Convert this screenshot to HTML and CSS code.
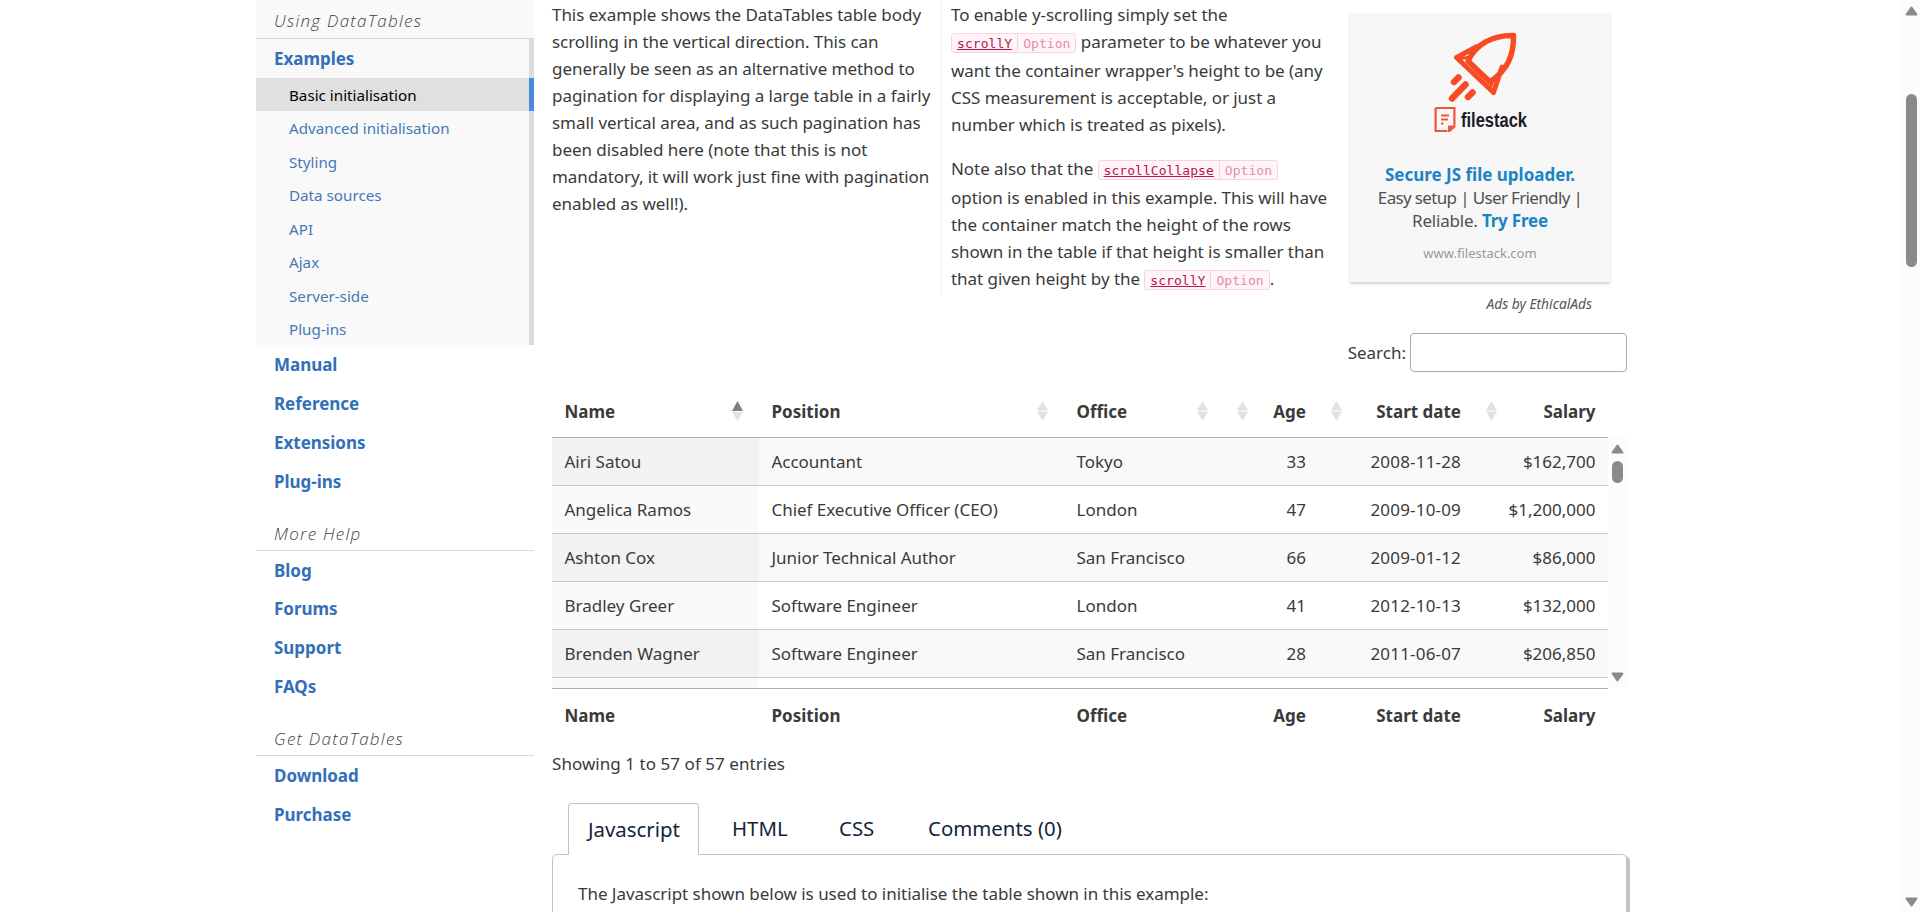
FILE: index.html
```html
<!DOCTYPE html>
<html lang="en">
<head>
<meta charset="utf-8">
<title>DataTables example - Scroll - vertical</title>
<link rel="stylesheet" href="styles.css">
</head>
<body>
<div class="page">
  <nav class="sidebar">
    <h3 class="nav-title nav-title-first">Using DataTables</h3>
    <div class="nav-active">
      <a class="nav-item">Examples</a>
      <a class="nav-sub selected">Basic initialisation</a>
      <a class="nav-sub">Advanced initialisation</a>
      <a class="nav-sub">Styling</a>
      <a class="nav-sub">Data sources</a>
      <a class="nav-sub">API</a>
      <a class="nav-sub">Ajax</a>
      <a class="nav-sub">Server-side</a>
      <a class="nav-sub">Plug-ins</a>
    </div>
    <a class="nav-item">Manual</a>
    <a class="nav-item">Reference</a>
    <a class="nav-item">Extensions</a>
    <a class="nav-item">Plug-ins</a>
    <h3 class="nav-title">More Help</h3>
    <a class="nav-item">Blog</a>
    <a class="nav-item">Forums</a>
    <a class="nav-item">Support</a>
    <a class="nav-item">FAQs</a>
    <h3 class="nav-title">Get DataTables</h3>
    <a class="nav-item">Download</a>
    <a class="nav-item">Purchase</a>
  </nav>

  <main class="main">
    <section class="intro">
      <div class="col col-a">
        <p><span class="line">This example shows the DataTables table body</span>
        <span class="line">scrolling in the vertical direction. This can</span>
        <span class="line">generally be seen as an alternative method to</span>
        <span class="line">pagination for displaying a large table in a fairly</span>
        <span class="line">small vertical area, and as such pagination has</span>
        <span class="line">been disabled here (note that this is not</span>
        <span class="line">mandatory, it will work just fine with pagination</span>
        <span class="line">enabled as well!).</span></p>
      </div>
      <div class="col col-b">
        <p><span class="line">To enable y-scrolling simply set the</span>
        <span class="line tagged"><code class="tag"><a>scrollY</a><i>Option</i></code> parameter to be whatever you</span>
        <span class="line">want the container wrapper's height to be (any</span>
        <span class="line">CSS measurement is acceptable, or just a</span>
        <span class="line">number which is treated as pixels).</span></p>
        <p><span class="line tagged">Note also that the <code class="tag"><a>scrollCollapse</a><i>Option</i></code></span>
        <span class="line">option is enabled in this example. This will have</span>
        <span class="line">the container match the height of the rows</span>
        <span class="line">shown in the table if that height is smaller than</span>
        <span class="line tagged">that given height by the <code class="tag"><a>scrollY</a><i>Option</i></code>.</span></p>
      </div>
      <aside class="ad">
        <div class="ad-box">
          <svg class="ad-logo" width="140" height="110" viewBox="-13 0 140 110">
            <g fill="none" stroke="#fa4a25" stroke-linejoin="round" stroke-linecap="round">
              <path stroke-width="5.5" d="M48 30 L39 37 L70.500 61 L72.500 50 C84 42 92 26 90 9.500 C72 9 55 18 48 30 Z" stroke="none"/>
              <path stroke-width="5.5" d="M45 35 C53 18 70 9 90.500 9.500 C91 30 84 44 67 56 Z"/>
              <path stroke-width="5" d="M54 20.500 L33.500 31.500 L70.500 66.500 L79 41"/>
              <path stroke-width="3" d="M38 32.500 L47 31 M68 60 L71 52"/>
              <path stroke-width="6.500" d="M31 56 L35.500 51.500 M29 72.500 L42.500 58.500 M45 71 L49.500 66.500"/>
            </g>
            <path fill="none" stroke="#f0563c" stroke-width="2.200" d="M12.600 82 H31.400 V99.500 M24.500 105 H12.600 V82"/>
            <path fill="#f0563c" d="M32.500 99.500 V101 L27 106 H25 V99.500 Z"/>
            <path fill="none" stroke="#f0563c" stroke-width="2" d="M18 89.500 H26 M18 93.500 H25 M18 97.500 H20.500"/>
            <text x="38" y="101" textLength="66" lengthAdjust="spacingAndGlyphs" class="ad-brand">filestack</text>
          </svg>
          <div class="ad-text">
            <div class="ad-l1"><b>Secure JS file uploader.</b></div>
            <div class="ad-l2">Easy setup | User Friendly |</div>
            <div class="ad-l3">Reliable. <b>Try Free</b></div>
          </div>
          <div class="ad-url">www.filestack.com</div>
        </div>
        <div class="ad-by">Ads by EthicalAds</div>
      </aside>
    </section>

    <div class="search"><label for="q">Search:</label><input id="q" type="text"></div>

    <div class="row head">
      <div>Name<svg class="sort asc" viewBox="0 0 11 20"><path d="M5.500 0L11 10H0Z"/><path d="M0 11H11L5.500 20Z"/></svg></div>
      <div>Position<svg class="sort" viewBox="0 0 11 20"><path d="M5.500 0L11 9.500H0Z"/><path d="M0 10.500H11L5.500 20Z"/></svg></div>
      <div>Office<svg class="sort" viewBox="0 0 11 20"><path d="M5.500 0L11 9.500H0Z"/><path d="M0 10.500H11L5.500 20Z"/></svg></div>
      <div><svg class="sort" viewBox="0 0 11 20"><path d="M5.500 0L11 9.500H0Z"/><path d="M0 10.500H11L5.500 20Z"/></svg>Age</div>
      <div><svg class="sort" viewBox="0 0 11 20"><path d="M5.500 0L11 9.500H0Z"/><path d="M0 10.500H11L5.500 20Z"/></svg>Start date</div>
      <div><svg class="sort" viewBox="0 0 11 20"><path d="M5.500 0L11 9.500H0Z"/><path d="M0 10.500H11L5.500 20Z"/></svg>Salary</div>
    </div>
    <div class="scroll-body">
      <div class="rows">
        <div class="row"><div>Airi Satou</div><div>Accountant</div><div>Tokyo</div><div>33</div><div>2008-11-28</div><div>$162,700</div></div>
        <div class="row"><div>Angelica Ramos</div><div>Chief Executive Officer (CEO)</div><div>London</div><div>47</div><div>2009-10-09</div><div>$1,200,000</div></div>
        <div class="row"><div>Ashton Cox</div><div>Junior Technical Author</div><div>San Francisco</div><div>66</div><div>2009-01-12</div><div>$86,000</div></div>
        <div class="row"><div>Bradley Greer</div><div>Software Engineer</div><div>London</div><div>41</div><div>2012-10-13</div><div>$132,000</div></div>
        <div class="row"><div>Brenden Wagner</div><div>Software Engineer</div><div>San Francisco</div><div>28</div><div>2011-06-07</div><div>$206,850</div></div>
        <div class="row"><div></div><div></div><div></div><div></div><div></div><div></div></div>
      </div>
      <div class="bar bar-table">
        <svg width="13" height="10" viewBox="0 0 13 10"><path d="M6.500 1.500L11.500 8.500H1.500Z"/></svg>
        <span class="thumb"></span>
        <svg width="13" height="10" viewBox="0 0 13 10"><path d="M6.500 8.500L11.500 1.500H1.500Z"/></svg>
      </div>
    </div>
    <div class="row foot"><div>Name</div><div>Position</div><div>Office</div><div>Age</div><div>Start date</div><div>Salary</div></div>
    <div class="info">Showing 1 to 57 of 57 entries</div>

    <div class="tabs">
      <a class="tab tab-js active">Javascript</a><a class="tab tab-html">HTML</a><a class="tab tab-css">CSS</a><a class="tab tab-com">Comments (0)</a>
    </div>
    <div class="panel">The Javascript shown below is used to initialise the table shown in this example:</div>
  </main>

  <div class="bar bar-page">
    <svg width="13" height="10" viewBox="0 0 13 10"><path d="M6.500 1.500L11.500 8.500H1.500Z"/></svg>
    <span class="thumb"></span>
    <svg width="13" height="10" viewBox="0 0 13 10"><path d="M6.500 8.500L11.500 1.500H1.500Z"/></svg>
  </div>
</div>
</body>
</html>
```
FILE: styles.css
```css
* { box-sizing: border-box; }
html, body { margin: 0; height: 912px; overflow: hidden; background: #fff; }
body { font: 17px/27px "Noto Sans", "Open Sans", sans-serif; color: #3a3a3a; }
p, h3 { margin: 0; }
.page { display: flex; height: 912px; padding-left: 256px; overflow: hidden; }

/* Sidebar */
.sidebar { width: 278px; flex: none; display: flex; flex-direction: column; margin-right: 18px; }
.nav-title {
  height: 50px; flex: none; padding: 19px 0 0 18px; border-bottom: 1px solid #d9d9d9;
  font: italic 300 17px/27px "Open Sans", "Noto Sans", sans-serif; letter-spacing: 1.25px; color: #444;
}
.nav-title-first { height: 39px; padding-top: 7px; background: #f9f9f9; }
.nav-active { flex: none; height: 306px; background: #f9f9f9; border-right: 5px solid #dcdcdc; }
.nav-item { display: block; flex: none; height: 38.9px; padding-left: 18px; line-height: 40.5px; font-weight: 700; letter-spacing: -.03px; color: #3270b8; }
.nav-sub { display: block; height: 33.45px; padding-left: 33px; line-height: 35px; font-size: 15.2px; color: #4678b4; }
.nav-sub.selected { background: #e0e0e0; color: #000; margin-right: -5px; border-right: 5px solid #4a8ad8; }

/* Intro */
.main { width: 1075px; flex: none; display: flex; flex-direction: column; }
.intro { display: flex; height: 332px; flex: none; }
.col { height: 295px; padding-top: 1px; letter-spacing: -.05px; }
.col-a { width: 389px; }
.col-b { width: 409px; padding-left: 9px; border-left: 1px solid #f2f2f2; }
.col p { margin-bottom: 17.5px; }
.line { display: block; height: 27px; white-space: nowrap; }
.line.tagged { height: 28.8px; }
.tag {
  display: inline-flex; height: 20px; border: 1px solid #f6d3de; border-radius: 3px;
  background: #fff4f8; font: 13px/19px "DejaVu Sans Mono", monospace; letter-spacing: .05px;
}
.tag a { padding: 0 5px; color: #b91350; text-decoration: underline; border-right: 1px solid #f6d3de; }
.tag i { padding: 0 5px; font-style: normal; color: #e58cab; }

/* Advert */
.ad { width: 260px; padding-top: 13px; }
.ad-box {
  height: 269px; background: #f7f7f7; border-radius: 2px; text-align: center;
  box-shadow: 0 2px 3px rgba(0, 0, 0, .18); display: flex; flex-direction: column; align-items: center;
}
.ad-logo { margin-top: 13px; flex: none; overflow: visible; }
.ad-brand { font: 700 20px "Liberation Sans", sans-serif; fill: #1c1b26; }
.ad-text { margin-top: 27px; line-height: 23px; color: #505050; white-space: nowrap; }
.ad-text b { color: #1a84c4; }
.ad-l2 { letter-spacing: -.65px; }
.ad-l3 { letter-spacing: -.2px; }
.ad-url { margin-top: 10px; font-size: 13px; line-height: 22px; color: #999; }
.ad-by { margin: 10px 18px 0 0; text-align: right; font-size: 13.8px; line-height: 24px; font-style: italic; color: #555; }

/* Table */
.search { height: 41px; flex: none; display: flex; justify-content: flex-end; align-items: center; gap: 4px; }
.search input { width: 217px; height: 39px; border: 1px solid #aaa; border-radius: 4px; background: #fff; }
.row {
  display: grid; grid-template-columns: 207px 305px 160px 94.5px 155px 134.5px; width: 1056px;
  height: 48px; flex: none; border-bottom: 1px solid #c9c9c9; line-height: 47px; white-space: nowrap;
}
.row > div { padding: 0 12.5px; }
.row > div:nth-child(n+4) { text-align: right; }
.head { height: 51px; margin-top: 14px; border-bottom-color: #aeaeae; font-weight: 700; line-height: 49px; }
.head > div { display: flex; justify-content: space-between; align-items: center; padding-bottom: 2px; }
.head > div:nth-child(-n+3) { padding-right: 16.5px; }
.head > div:nth-child(n+4) { padding-left: 12.5px; }
.sort { width: 11px; height: 20px; margin-bottom: 1px; fill: #e2e2e2; }
.sort.asc path:first-child { fill: #808080; }
.scroll-body { display: flex; height: 250px; flex: none; overflow: hidden; }
.rows .row:nth-child(odd) { background: #f9f9f9; }
.rows .row:nth-child(odd) > div:first-child { background: #f2f2f2; }
.rows .row:nth-child(even) > div:first-child { background: #fafafa; }
.rows .row > div:nth-child(2) { letter-spacing: -.03px; }
.rows .row > div:nth-child(5) { letter-spacing: .18px; }
.foot { height: 47px; border: 0; border-top: 1px solid #aeaeae; font-weight: 700; line-height: 54px; }
.info { margin-top: 15px; height: 27px; flex: none; letter-spacing: .05px; }

/* Tabs */
.tabs { display: flex; flex: none; margin: 26px 0 -1px 16px; height: 52px; position: relative; }
.tab { height: 52px; font-size: 20.4px; line-height: 51px; color: #12243c; white-space: nowrap; }
.tab-js { width: 131px; padding-left: 19px; margin-right: 33px; border: 1px solid #c4c4c4; border-bottom: 0; border-radius: 4px 4px 0 0; background: #fff; }
.tab-html { width: 107px; }
.tab-css { width: 89px; }
.panel { height: 90px; flex: none; padding: 25px 25px; border: 1px solid #c4c4c4; border-radius: 5px; box-shadow: 3px 2px 1px #c2c2c2; letter-spacing: -.03px; }

/* Scroll bars */
.bar { display: flex; flex-direction: column; align-items: center; background: #fcfcfc; }
.bar svg { fill: #8a8a8a; stroke: #8a8a8a; stroke-width: 2; stroke-linejoin: round; flex: none; }
.thumb { width: 11px; border-radius: 6px; background: #8a8a8a; flex: none; }
.bar-table { width: 19px; padding: 6px 0; }
.bar-table .thumb { height: 22px; margin: 7px 0 auto; }
.bar-page { width: 19px; margin-left: auto; padding: 6px 0 5px 1px; }
.bar-page .thumb { height: 173px; margin: 78px 0 auto; }
```
